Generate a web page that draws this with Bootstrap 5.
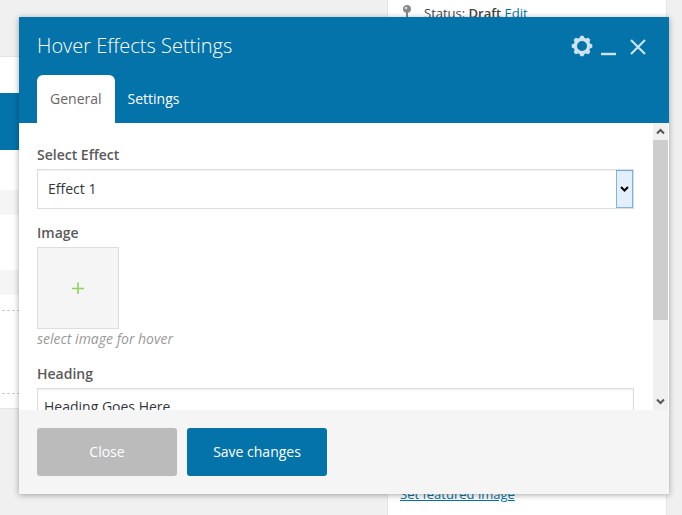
<!DOCTYPE html>
<html lang="en">
<head>
<meta charset="utf-8">
<meta name="viewport" content="width=device-width, initial-scale=1">
<title>Hover Effects Settings</title>
<link href="https://cdn.jsdelivr.net/npm/bootstrap@5.3.0/dist/css/bootstrap.min.css" rel="stylesheet">
<style>
:root{--brand:#0473aa;--line:#ddd}
body{background:#f0f0f0;font-family:"Open Sans",sans-serif;font-size:14px;line-height:20px;color:#32373c}
/* editor page behind the dialog */
.editor-main{margin:56px 20px 0 0;height:353px;background:#fff;border:solid #e5e5e5;border-width:1px 0}
.strip-title{height:36px}
.strip-brand{height:57px;background:var(--brand)}
.strip-row{height:40px}
.strip-gap{height:25px;background:#f5f5f5}
.strip-field{height:55px}
.strip-drop{height:84px;margin:15px 2px;border:dashed #ccc;border-width:1px 0}
.editor-side{width:280px;margin-right:15px;background:#fff;border:solid #e5e5e5;border-width:0 1px;font-size:13px;padding:3px 12px 11px;color:#444}
.editor-side a{color:var(--brand)}
/* dialog */
.overlay{padding:17px 13px 21px 19px}
.dialog{box-shadow:0 1px 6px rgba(0,0,0,.35);background:#fff}
.dialog-head{background:var(--brand);padding:14px 18px 0}
.dialog-head h1{font-size:20px;font-weight:300;line-height:30px;color:#fff}
.tool{color:#cde3ee;line-height:0}
.tabs{margin-top:14px}
.tabs .nav-link{height:48px;padding:14px 13px;border-radius:6px 6px 0 0;color:#fff}
.tabs .nav-link.active{background:#fff;color:#666}
.dialog-form{padding:22px 19px 0 18px;gap:14px}
.dialog-form label,.field-title{font-weight:600;color:#5a5a5a;margin-bottom:4px;display:block}
.box-input{border:1px solid var(--line);border-radius:0;font-size:14px;line-height:20px;color:#32373c;box-shadow:inset 0 1px 2px rgba(0,0,0,.07)}
.effect-select{height:40px;padding:0 30px 0 10px;background:#fff url("data:image/svg+xml,%3Csvg xmlns='http://www.w3.org/2000/svg' width='17' height='38'%3E%3Crect x='.5' y='.5' width='16' height='37' fill='%23e3effc' stroke='%237eb4ea'/%3E%3Cpath d='M5 17l3.500 3.500L12 17' fill='none' stroke='%23000' stroke-width='2'/%3E%3C/svg%3E") no-repeat right center;background-size:17px 38px}
.heading-input{height:36px;padding:0 6px}
.picker{width:82px;height:82px;background:#f5f5f5;border:1px solid var(--line);padding:0}
.hint{font-style:italic;color:#999;padding-bottom:1px}
.scroller{width:15px;margin-right:1px;background:#f0f0f0}
.scroller button{height:17px;line-height:0}
.scroller-thumb{height:180px;background:#cdcdcd}
.dialog-foot{background:#f5f5f5;padding:18px;gap:10px}
.dialog-foot .btn{width:140px;height:48px;padding:0;font-size:14px;line-height:20px;border:0;border-radius:3px;color:#fff}
.btn-dismiss,.btn-dismiss:hover{background:#bbb}
.btn-store,.btn-store:hover{background:var(--brand)}
</style>
</head>
<body class="vh-100 overflow-hidden position-relative">
<div class="d-flex h-100">
  <main class="editor-main flex-grow-1">
    <div class="strip-title"></div>
    <div class="strip-brand"></div>
    <div class="strip-row"></div>
    <div class="strip-gap"></div>
    <div class="strip-field"></div>
    <div class="strip-gap"></div>
    <div class="strip-drop"></div>
  </main>
  <aside class="editor-side flex-shrink-0 d-flex flex-column justify-content-between">
    <div class="d-flex">
      <svg class="me-2" width="16" height="20" viewBox="0 0 16 20" aria-hidden="true"><path d="M3 6a4 4 0 1 1 5 3.800V14l-1 4-1-4V9.800A4 4 0 0 1 3 6z" fill="#888"/><circle cx="6" cy="5" r="1.300" fill="#ddd"/></svg>
      <span>Status: <span class="fw-semibold">Draft</span> <a href="#" class="text-decoration-none">Edit</a></span>
    </div>
    <a href="#">Set featured image</a>
  </aside>
</div>

<div class="overlay position-absolute top-0 start-0 w-100 h-100">
  <section class="dialog d-flex flex-column h-100" role="dialog" aria-labelledby="dialogTitle">
    <header class="dialog-head">
      <div class="d-flex justify-content-between align-items-center">
        <h1 id="dialogTitle" class="m-0">Hover Effects Settings</h1>
        <div class="d-flex align-items-center gap-2 pe-1">
          <button type="button" class="tool btn p-0 border-0" aria-label="Options">
            <svg width="22" height="22" viewBox="-11 -11 22 22" fill="currentColor"><defs><path id="tooth" d="M-3.300-6.500L-1.400-10.300H1.400L3.300-6.500z"/></defs><circle r="6.600" fill="none" stroke="currentColor" stroke-width="3.200"/><use href="#tooth"/><use href="#tooth" transform="rotate(45)"/><use href="#tooth" transform="rotate(90)"/><use href="#tooth" transform="rotate(135)"/><use href="#tooth" transform="rotate(180)"/><use href="#tooth" transform="rotate(225)"/><use href="#tooth" transform="rotate(270)"/><use href="#tooth" transform="rotate(315)"/></svg>
          </button>
          <button type="button" class="tool btn p-0 border-0" aria-label="Minimize">
            <svg width="16" height="22" viewBox="0 0 16 22"><path d="M0 19h15" stroke="currentColor" stroke-width="2.400"/></svg>
          </button>
          <button type="button" class="tool btn p-0 border-0 ms-1" aria-label="Close dialog">
            <svg width="18" height="22" viewBox="0 0 18 22"><path d="M2 5l14 14M16 5L2 19" stroke="currentColor" stroke-width="2.200"/></svg>
          </button>
        </div>
      </div>
      <nav class="tabs nav">
        <a class="nav-link active" href="#">General</a>
        <a class="nav-link" href="#">Settings</a>
      </nav>
    </header>

    <div class="d-flex flex-grow-1 overflow-hidden">
      <form class="dialog-form flex-grow-1 d-flex flex-column">
        <div>
          <label for="effect">Select Effect</label>
          <select id="effect" class="form-select box-input effect-select"><option>Effect 1</option></select>
        </div>
        <div>
          <span class="field-title" id="imageTitle">Image</span>
          <button type="button" class="picker d-flex align-items-center justify-content-center" aria-labelledby="imageTitle">
            <svg width="12" height="12" viewBox="0 0 12 12"><path d="M0 6.500h12M6 .5v12" stroke="#8fd35c" stroke-width="1.600"/></svg>
          </button>
          <div class="hint">select image for hover</div>
        </div>
        <div>
          <label for="heading">Heading</label>
          <input id="heading" type="text" class="form-control box-input heading-input" value="Heading Goes Here">
        </div>
      </form>
      <div class="scroller d-flex flex-column flex-shrink-0">
        <button type="button" class="btn p-0 border-0" aria-label="Scroll up"><svg width="9" height="7" viewBox="0 0 9 7"><path d="M1 5.500l3.500-3.500L8 5.500" fill="none" stroke="#555" stroke-width="2"/></svg></button>
        <div class="scroller-thumb"></div>
        <button type="button" class="btn p-0 border-0 mt-auto" aria-label="Scroll down"><svg width="9" height="7" viewBox="0 0 9 7"><path d="M1 1.500L4.500 5 8 1.500" fill="none" stroke="#555" stroke-width="2"/></svg></button>
      </div>
    </div>

    <footer class="dialog-foot d-flex">
      <button type="button" class="btn btn-dismiss">Close</button>
      <button type="button" class="btn btn-store">Save changes</button>
    </footer>
  </section>
</div>
<script src="https://cdn.jsdelivr.net/npm/bootstrap@5.3.0/dist/js/bootstrap.bundle.min.js"></script>
</body>
</html>
